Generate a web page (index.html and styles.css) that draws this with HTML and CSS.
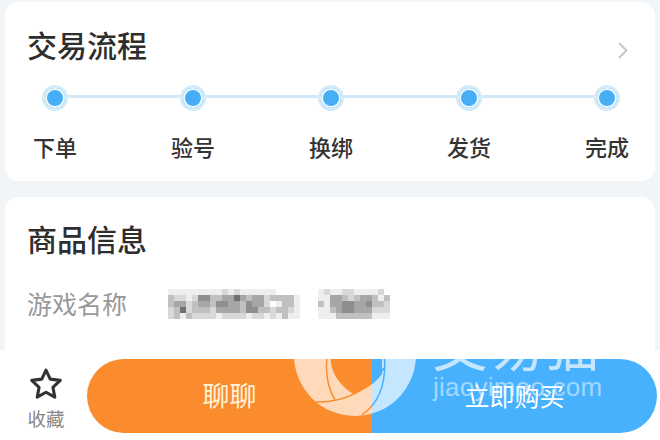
FILE: index.html
```html
<!DOCTYPE html>
<html lang="zh-CN">
<head>
    <meta charset="UTF-8">
    <meta name="viewport" content="width=device-width, initial-scale=1.0">
    <title>交易流程</title>
    <link rel="stylesheet" href="styles.css">
</head>
<body>
    <div class="page">
        <main class="content">
            <section class="card flow-card">
                <div class="card-head">
                    <h2 class="card-title">交易流程</h2>
                    <svg class="chevron" width="10" height="17" viewBox="0 0 10 17">
                        <path d="M1 1l7.5 7.5L1 16" fill="none" stroke="#c4c4c4" stroke-width="1.8"/>
                    </svg>
                </div>
                <div class="track">
                    <span class="dot"></span><span class="line"></span>
                    <span class="dot"></span><span class="line"></span>
                    <span class="dot"></span><span class="line"></span>
                    <span class="dot"></span><span class="line"></span>
                    <span class="dot"></span>
                </div>
                <div class="steps">
                    <span class="step">下单</span>
                    <span class="step">验号</span>
                    <span class="step">换绑</span>
                    <span class="step">发货</span>
                    <span class="step">完成</span>
                </div>
            </section>

            <section class="card info-card">
                <h2 class="card-title">商品信息</h2>
                <div class="info-row">
                    <span class="info-label">游戏名称</span>
                    <!-- 打码的游戏名 -->
                    <svg class="mosaic" width="222" height="30" viewBox="0 0 222 30" fill="none" stroke-width="6" shape-rendering="crispEdges">
                        <path stroke="#eee" d="M0 3h54M60 3h6M72 3h36M150 3h6M162 3h12M186 3h24M18 9h6M126 9h6M150 9h12M210 9h6M108 15h6M126 15h6M156 15h6M126 21h6M150 21h12M12 27h6M48 27h6M78 27h6M96 27h6M108 27h6M120 27h12M150 27h18M204 27h18"/>
                        <path stroke="#d8d8d8" d="M54 3h6M66 3h6M156 3h6M174 3h12M210 3h6M6 9h12M24 9h6M96 9h6M180 9h6M18 15h6M96 15h6M216 15h6M0 21h6M18 21h6M42 21h6M102 21h6M120 21h6M204 21h18M0 27h6M24 27h24M54 27h24M84 27h12M102 27h6"/>
                        <path stroke="#c0c0c0" d="M0 9h6M42 9h12M78 9h6M102 9h24M174 9h6M186 9h6M204 9h6M216 9h6M0 15h6M24 15h6M42 15h6M72 15h6M114 15h12M150 15h6M204 15h12M6 21h6M24 21h18M72 21h6M90 21h12M108 21h12M162 21h6M6 27h6M18 27h6M114 27h6M168 27h36"/>
                        <path stroke="#a6a6a6" d="M54 9h12M72 9h6M84 9h12M162 9h12M192 9h12M6 15h12M30 15h12M60 15h12M84 15h12M162 15h12M186 15h18M48 21h24M168 21h6M186 21h18"/>
                        <path stroke="#8e8e8e" d="M30 9h12M48 15h12M78 15h6M174 15h12M198 15h6M78 21h12M174 21h12"/>
                        <path stroke="#707070" d="M66 9h6M12 21h6"/>
                    </svg>
                </div>
            </section>
        </main>

        <footer class="bottom-bar">
            <div class="fav">
                <svg class="star" width="34" height="32" viewBox="0 0 32 31">
                    <path d="M16 2l4.1 8.8 9.7 1.2-7.1 6.7 1.8 9.5L16 23.5l-8.5 4.7 1.8-9.5-7.1-6.7 9.7-1.2z" fill="none" stroke="#333" stroke-width="3" stroke-linejoin="round"/>
                </svg>
                <span class="fav-text">收藏</span>
            </div>
            <div class="actions">
                <button class="btn btn-chat">聊聊</button>
                <button class="btn btn-buy">立即购买</button>
            </div>

            <!-- 交易猫水印 -->
            <svg class="watermark" width="660" height="90" viewBox="0 350 660 90">
                <defs>
                    <mask id="logoCut" maskUnits="userSpaceOnUse" x="280" y="350" width="150" height="80">
                        <circle cx="355" cy="355" r="61" fill="#fff"/>
                        <path d="M331 350C328 372 340 385 353 394 365 389 375 384 382 374V350Z" fill="#000"/>
                        <g fill="none" stroke="#000" stroke-width="1.5">
                            <path d="M328 350C324 372 328 388 335 400"/>
                            <path d="M316 402C345 403 372 388 384 368"/>
                            <path d="M362 415C376 405 388 388 384 350"/>
                        </g>
                    </mask>
                </defs>
                <rect x="285" y="350" width="140" height="75" fill="#fff" fill-opacity=".68" mask="url(#logoCut)"/>
                <text class="wm-name" x="432" y="366">交易猫</text>
                <text class="wm-site" x="433" y="396">jiaoyimao.com</text>
            </svg>
        </footer>
    </div>
</body>
</html>
```

FILE: styles.css
```css
* {
    box-sizing: border-box;
}
body {
    margin: 0;
    background: #f2f5f8;
    font-family: "Noto Sans CJK SC", "Liberation Sans", sans-serif;
    color: #333;
}
.page {
    display: flex;
    flex-direction: column;
    height: 440px;
    overflow: hidden;
}
.content {
    flex: 1;
    min-height: 0;
    overflow: hidden;
    padding: 2px 5px 0;
}
.card {
    background: #fff;
    border-radius: 14px;
    padding: 22px 22px 20px;
}
.card-head {
    display: flex;
    justify-content: space-between;
}
.card-title {
    margin: 0;
    font-size: 30px;
    line-height: 40px;
    font-weight: 500;
    color: #2e2e2e;
}
.chevron {
    margin: 18px 5px 0 0;
}

.track {
    display: flex;
    align-items: center;
    margin: 21px 13px 0 15px;
}
.dot {
    flex: none;
    width: 26px;
    height: 26px;
    border-radius: 50%;
    background: #46aef5;
    border: 3px solid #d3ebf8;
    box-shadow: inset 0 0 0 2px #f2fafe;
}
.line {
    flex: 1;
    height: 3px;
    margin-bottom: 4px;
    background: #d3e9f7;
}
.steps {
    display: flex;
    justify-content: space-between;
    margin: 20px 3px 0 5px;
}
.step {
    width: 46px;
    text-align: center;
    font-size: 22px;
    line-height: 30px;
    font-weight: 500;
    color: #333;
}

.info-card {
    margin-top: 16px;
    padding-top: 21px;
    height: 200px;
}
.info-row {
    display: flex;
    align-items: center;
    margin-top: 30px;
}
.info-label {
    width: 141px;
    margin-bottom: 2px;
    font-size: 25px;
    line-height: 30px;
    color: #999;
}
.mosaic {
    display: block;
    filter: blur(0.6px);
}

.bottom-bar {
    position: relative;
    flex: none;
    display: flex;
    height: 90px;
    background: #fff;
}
.fav {
    flex: none;
    width: 87px;
    padding: 18px 0 0 5px;
    display: flex;
    flex-direction: column;
    align-items: center;
}
.star {
    display: block;
}
.fav-text {
    margin-top: 6px;
    font-size: 18.5px;
    line-height: 24px;
    color: #888;
}
.actions {
    display: flex;
    width: 570px;
    height: 74px;
    margin-top: 9px;
    border-radius: 37px;
    overflow: hidden;
}
.btn {
    flex: 1;
    border: none;
    padding: 0 0 3px;
    font-family: inherit;
    color: #fff;
}
.btn-chat {
    background: #fb8c2e;
    font-size: 27px;
    color: #fff3dc;
}
.btn-buy {
    background: #47b1fe;
    font-size: 25px;
}
.watermark {
    position: absolute;
    top: 0;
    left: 0;
    pointer-events: none;
}
.wm-name {
    font-size: 56px;
    fill: #fff;
    fill-opacity: .68;
}
.wm-site {
    font-family: "Liberation Sans", sans-serif;
    font-size: 26px;
    letter-spacing: .25px;
    fill: #fff;
    fill-opacity: .5;
}
```
